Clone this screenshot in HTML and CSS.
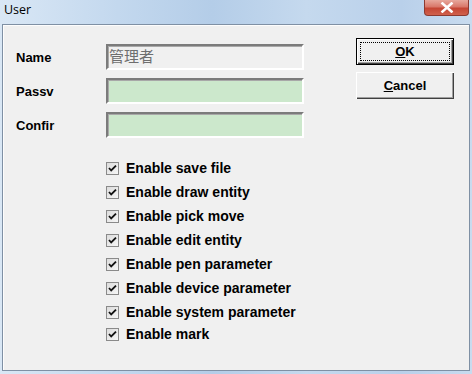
FILE: index.html
```html
<!DOCTYPE html>
<html>
<head>
<meta charset="utf-8">
<link rel="stylesheet" href="styles.css">
</head>
<body>
<div class="window">
  <div class="titlebar">
    <span class="title">User</span>
    <div class="close">
      <svg width="14" height="11" viewBox="0 0 14 11"><path d="M2.5 1.5 L11.5 9.5 M11.5 1.5 L2.5 9.5" stroke="#fff" stroke-width="2.6" stroke-linecap="square"/></svg>
    </div>
  </div>
  <div class="client">
    <div class="left">
      <div class="form">
        <span class="label">Name</span>
        <div class="field disabled">管理者</div>
        <span class="label">Passv</span>
        <div class="field green"></div>
        <span class="label">Confir</span>
        <div class="field green"></div>
      </div>
      <div class="checks">
        <div class="check"><span class="box"><svg width="13" height="13" viewBox="0 0 13 13"><path d="M3 6 L5.2 8.5 L10 3.6" fill="none" stroke="#111" stroke-width="1.8"/></svg></span>Enable save file</div>
        <div class="check"><span class="box"><svg width="13" height="13" viewBox="0 0 13 13"><path d="M3 6 L5.2 8.5 L10 3.6" fill="none" stroke="#111" stroke-width="1.8"/></svg></span>Enable draw entity</div>
        <div class="check"><span class="box"><svg width="13" height="13" viewBox="0 0 13 13"><path d="M3 6 L5.2 8.5 L10 3.6" fill="none" stroke="#111" stroke-width="1.8"/></svg></span>Enable pick move</div>
        <div class="check"><span class="box"><svg width="13" height="13" viewBox="0 0 13 13"><path d="M3 6 L5.2 8.5 L10 3.6" fill="none" stroke="#111" stroke-width="1.8"/></svg></span>Enable edit entity</div>
        <div class="check"><span class="box"><svg width="13" height="13" viewBox="0 0 13 13"><path d="M3 6 L5.2 8.5 L10 3.6" fill="none" stroke="#111" stroke-width="1.8"/></svg></span>Enable pen parameter</div>
        <div class="check"><span class="box"><svg width="13" height="13" viewBox="0 0 13 13"><path d="M3 6 L5.2 8.5 L10 3.6" fill="none" stroke="#111" stroke-width="1.8"/></svg></span>Enable device parameter</div>
        <div class="check"><span class="box"><svg width="13" height="13" viewBox="0 0 13 13"><path d="M3 6 L5.2 8.5 L10 3.6" fill="none" stroke="#111" stroke-width="1.8"/></svg></span>Enable system parameter</div>
        <div class="check last"><span class="box"><svg width="13" height="13" viewBox="0 0 13 13"><path d="M3 6 L5.2 8.5 L10 3.6" fill="none" stroke="#111" stroke-width="1.8"/></svg></span>Enable mark</div>
      </div>
    </div>
    <div class="buttons">
      <button class="btn default"><u>O</u>K</button>
      <button class="btn"><u>C</u>ancel</button>
    </div>
  </div>
</div>
</body>
</html>
```

FILE: styles.css
```css
html, body {
  margin: 0;
  padding: 0;
}
body {
  width: 472px;
  height: 374px;
  overflow: hidden;
}
.window {
  width: 472px;
  height: 374px;
  display: flex;
  flex-direction: column;
  background: linear-gradient(90deg, #d9e7f5 0%, #c3d8ee 25%, #b4cde8 45%, #c5d9ee 65%, #b9d0ea 85%, #c8dbef 100%);
}
.titlebar {
  height: 24px;
  flex: none;
  display: flex;
  justify-content: space-between;
  align-items: flex-start;
}
.title {
  font-family: "Open Sans", "Noto Sans", sans-serif;
  font-size: 12.5px;
  line-height: 20px;
  padding-left: 4px;
  color: #000;
}
.close {
  width: 45px;
  height: 16px;
  margin-right: 3px;
  box-sizing: border-box;
  border: 1px solid #8d3a30;
  border-top: none;
  border-radius: 0 0 4px 4px;
  background: linear-gradient(180deg, #e7a89c 0%, #d9786a 45%, #c54634 55%, #d0614d 100%);
  display: flex;
  align-items: center;
  justify-content: center;
}
.client {
  flex: 1;
  margin: 0 2px 3px 2px;
  border: 1px solid #7f90a4;
  background: #f0f0f0;
  display: flex;
  align-items: flex-start;
  box-shadow: inset 1px 1px 0 #fdfdfd;
}
.left {
  padding: 19px 0 0 13px;
  display: flex;
  flex-direction: column;
}
.form {
  display: grid;
  grid-template-columns: 90px 198px;
  grid-auto-rows: 26px;
  row-gap: 8px;
  align-items: center;
}
.label {
  font-family: "Liberation Sans", Arial, sans-serif;
  font-weight: bold;
  font-size: 13px;
  color: #000;
  white-space: nowrap;
}
.field {
  height: 26px;
  box-sizing: border-box;
  border-top: 2px solid #7b7b7b;
  border-left: 2px solid #7b7b7b;
  border-bottom: 2px solid #ffffff;
  border-right: 2px solid #ffffff;
  box-shadow: inset 1px 1px 0 #a8a8a8;
}
.field.disabled {
  background: #f0f0f0;
  color: #6e6e6e;
  font-family: "Noto Sans CJK SC", sans-serif;
  font-size: 15px;
  line-height: 20px;
  padding-left: 1px;
}
.field.green {
  background: #cce8cc;
}
.checks {
  margin: 18px 0 0 90px;
  display: flex;
  flex-direction: column;
}
.check {
  height: 24px;
  display: flex;
  align-items: center;
  gap: 7px;
  font-family: "Liberation Sans", Arial, sans-serif;
  font-weight: bold;
  font-size: 14px;
  color: #000;
}
.check.last {
  height: 20px;
}
.box {
  width: 13px;
  height: 13px;
  box-sizing: border-box;
  border: 1px solid #8a8a8a;
  background: linear-gradient(135deg, #dcdcdc, #f6f6f6);
  display: flex;
  align-items: center;
  justify-content: center;
}
.box svg {
  flex: none;
}
.buttons {
  margin-left: auto;
  margin-right: 15px;
  padding-top: 13px;
  display: flex;
  flex-direction: column;
  gap: 7px;
}
.btn {
  width: 98px;
  height: 27px;
  box-sizing: border-box;
  border: none;
  padding: 0;
  background: #f0f0f0;
  font-family: "Liberation Sans", Arial, sans-serif;
  font-weight: bold;
  font-size: 13px;
  color: #000;
  box-shadow: inset 1px 1px 0 #ffffff, inset -1px -1px 0 #404040, inset -2px -2px 0 #a0a0a0;
  position: relative;
}
.btn.default {
  border: 1px solid #000;
}
.btn.default::after {
  content: "";
  position: absolute;
  left: 3px;
  top: 3px;
  right: 3px;
  bottom: 3px;
  border: 1px dotted #000;
}
```
